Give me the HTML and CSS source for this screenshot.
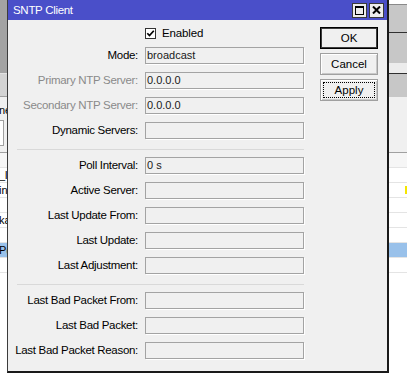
FILE: index.html
```html
<!DOCTYPE html>
<html>
<head>
<meta charset="utf-8">
<link rel="stylesheet" href="styles.css">
</head>
<body>
<div class="desk">
  <div class="strip strip-left">
    <div class="b b-dark73"></div>
    <div class="b b-hl"></div>
    <div class="b b-gray22"></div>
    <div class="b b-line"></div>
    <div class="b b-text22"><span class="clip-text">ne</span></div>
    <div class="b b-input33"><span class="mini-input"></span></div>
    <div class="b b-line"></div>
    <div class="lrow lrow-head"></div>
    <div class="lrow"><span class="clip-text">_lo</span></div>
    <div class="lrow"><span class="clip-text">in</span></div>
    <div class="lrow"></div>
    <div class="lrow"><span class="clip-text">ka</span></div>
    <div class="lrow"></div>
    <div class="lrow lrow-sel"><span class="clip-text">P(</span></div>
    <div class="lrow"></div>
  </div>
  <div class="strip strip-right">
    <div class="b b-white4"></div>
    <div class="b b-midline"></div>
    <div class="b b-gray27"></div>
    <div class="b b-darkline"></div>
    <div class="b b-gray30"></div>
    <div class="b b-light10"></div>
    <div class="b b-darkline"></div>
    <div class="b b-gray23"></div>
    <div class="b b-face55"></div>
    <div class="b b-line"></div>
    <div class="lrow lrow-head"></div>
    <div class="lrow"></div>
    <div class="lrow"><span class="tip-mark"></span></div>
    <div class="lrow"></div>
    <div class="lrow"></div>
    <div class="lrow"></div>
    <div class="lrow lrow-sel"></div>
    <div class="lrow"></div>
  </div>

  <div class="dialog">
    <div class="titlebar">
      <span class="title">SNTP Client</span>
      <div class="tb-btns">
        <span class="tbtn">
          <svg width="9" height="9" viewBox="0 0 9 9"><rect x="0.5" y="0.5" width="8" height="8" fill="none" stroke="#000" stroke-width="1"/><rect x="0" y="0" width="9" height="2" fill="#000"/></svg>
        </span>
        <span class="tbtn">
          <svg width="9" height="8" viewBox="0 0 9 8"><path d="M1 0.5 L8 7.5 M8 0.5 L1 7.5" stroke="#000" stroke-width="2" fill="none"/></svg>
        </span>
      </div>
    </div>
    <div class="body">
      <div class="form">
        <div class="check-row">
          <span class="cbox"><svg width="9" height="9" viewBox="0 0 9 9"><path d="M1.3 4.2 L3.5 6.6 L7.8 1.8" stroke="#000" stroke-width="1.7" fill="none"/></svg></span>
          <span class="check-label">Enabled</span>
        </div>
        <div class="row"><span class="label">Mode:</span><span class="field">broadcast</span></div>
        <div class="row"><span class="label dis">Primary NTP Server:</span><span class="field">0.0.0.0</span></div>
        <div class="row"><span class="label dis">Secondary NTP Server:</span><span class="field">0.0.0.0</span></div>
        <div class="row"><span class="label">Dynamic Servers:</span><span class="field"></span></div>
        <div class="sep"></div>
        <div class="row"><span class="label">Poll Interval:</span><span class="field">0 s</span></div>
        <div class="row"><span class="label">Active Server:</span><span class="field"></span></div>
        <div class="row"><span class="label">Last Update From:</span><span class="field"></span></div>
        <div class="row"><span class="label">Last Update:</span><span class="field"></span></div>
        <div class="row"><span class="label">Last Adjustment:</span><span class="field"></span></div>
        <div class="sep"></div>
        <div class="row"><span class="label">Last Bad Packet From:</span><span class="field"></span></div>
        <div class="row"><span class="label">Last Bad Packet:</span><span class="field"></span></div>
        <div class="row"><span class="label">Last Bad Packet Reason:</span><span class="field"></span></div>
      </div>
      <div class="buttons">
        <div class="btn btn-default">OK</div>
        <div class="btn">Cancel</div>
        <div class="btn btn-focus"><span class="focus-ring">Apply</span></div>
      </div>
    </div>
  </div>
</div>
</body>
</html>
```

FILE: styles.css
```css
* { box-sizing: border-box; }
html, body { margin: 0; padding: 0; }
body {
  width: 407px;
  height: 380px;
  overflow: hidden;
  background: #ffffff;
  font-family: "Liberation Sans", Arial, sans-serif;
  font-size: 11px;
  color: #000;
}
.desk {
  position: relative;
  width: 407px;
  height: 380px;
  display: flex;
  justify-content: space-between;
}

/* background window strips */
.strip { display: flex; flex-direction: column; overflow: hidden; background: #fff; }
.strip-left { width: 7px; }
.strip-right { width: 18px; }
.b { flex: none; width: 100%; position: relative; }
.b-dark73 { height: 73px; background: #a3a3a3; }
.b-hl { height: 1px; background: #e2e2e2; }
.b-gray22 { height: 22px; background: #d3d3d3; }
.b-line { height: 1px; background: #a0a0a0; }
.b-text22 { height: 22px; background: #f0f0f0; display: flex; align-items: flex-end; padding-bottom: 2px; overflow: hidden; }
.b-input33 { height: 33px; background: #f0f0f0; padding-top: 1px; }
.mini-input { display: block; width: 4px; height: 26px; background: #fff; border: 1px solid #a0a0a0; border-left: none; }
.clip-text { white-space: nowrap; line-height: 13px; font-size: 11px; color: #000; margin-left: -1px; }
.lrow { flex: none; height: 15px; border-bottom: 1px solid #e4e4e4; background: #fff; display: flex; align-items: center; position: relative; overflow: hidden; }
.lrow-head { background: #f6f6f6; }
.lrow-sel { background: #99c1ea; }
.tip-mark { position: absolute; left: 16px; top: 3px; width: 2px; height: 8px; background: #f5e600; }

.b-white4 { height: 4px; background: #fff; }
.b-midline { height: 1px; background: #8a8a8a; }
.b-gray27 { height: 27px; background: #c7c7c7; }
.b-darkline { height: 1px; background: #303030; }
.b-gray30 { height: 30px; background: #c7c7c7; }
.b-light10 { height: 10px; background: #ececec; }
.b-gray23 { height: 23px; background: #c7c7c7; }
.b-face55 { height: 55px; background: #f0f0f0; }

/* dialog window */
.dialog {
  position: absolute;
  left: 7px;
  top: 0;
  width: 382px;
  height: 373px;
  background: #f0f0f0;
  border-left: 1px solid #3c3c3c;
  border-right: 2px solid #1a1a1a;
  border-bottom: 2px solid #1a1a1a;
  display: flex;
  flex-direction: column;
}
.titlebar {
  flex: none;
  height: 20px;
  background: #4a4fc9;
  color: #fff;
  display: flex;
  align-items: center;
  justify-content: space-between;
  padding: 0 3px 0 5px;
}
.title { font-size: 11.5px; letter-spacing: -0.3px; line-height: 13px; }
.tb-btns { display: flex; gap: 2px; }
.tbtn {
  width: 15px;
  height: 15px;
  background: #ececec;
  border: 1px solid #3a3a3a;
  display: flex;
  align-items: center;
  justify-content: center;
}
.tbtn svg { display: block; }

.body {
  flex: 1;
  display: flex;
  padding-top: 7px;
}
.form {
  width: 296px;
  display: flex;
  flex-direction: column;
  gap: 8px;
}
.check-row {
  height: 12px;
  display: flex;
  align-items: center;
  padding-left: 137px;
}
.cbox {
  width: 11px;
  height: 11px;
  background: #fff;
  border: 1px solid #333;
  display: flex;
  align-items: center;
  justify-content: center;
}
.cbox svg { display: block; }
.check-label { margin-left: 6px; line-height: 13px; font-size: 11.5px; letter-spacing: -0.15px; }
.row {
  height: 17px;
  display: flex;
  align-items: center;
  gap: 7px;
}
.label {
  width: 130px;
  text-align: right;
  white-space: nowrap;
  line-height: 13px;
  font-size: 11.5px;
  letter-spacing: -0.3px;
}
.label.dis { color: #8a8a8a; }
.field {
  width: 159px;
  height: 17px;
  background: #f0f0f0;
  border: 1px solid #a3a3a3;
  box-shadow: 1px 1px 0 #ffffff;
  padding-left: 1px;
  line-height: 15px;
  color: #1a1a1a;
  white-space: nowrap;
}
.sep {
  height: 1px;
  width: 287px;
  margin: 2px 0 -1px 9px;
  background: #d9d9d9;
}

.buttons {
  margin-left: 16px;
  width: 58px;
  display: flex;
  flex-direction: column;
  gap: 4px;
}
.btn {
  height: 22px;
  background: #f0f0f0;
  border: 1px solid #a0a0a0;
  box-shadow: inset 1px 1px 0 #ffffff, inset -1px -1px 0 #c8c8c8;
  display: flex;
  align-items: center;
  justify-content: center;
  line-height: 13px;
  font-size: 11.5px;
}
.btn-default {
  border: 1px solid #000;
  box-shadow: inset 0 0 0 1px #3c3c3c;
}
.btn-focus { padding: 2px; }
.focus-ring {
  flex: 1;
  align-self: stretch;
  border: 1px dotted #000;
  display: flex;
  align-items: center;
  justify-content: center;
}
```
